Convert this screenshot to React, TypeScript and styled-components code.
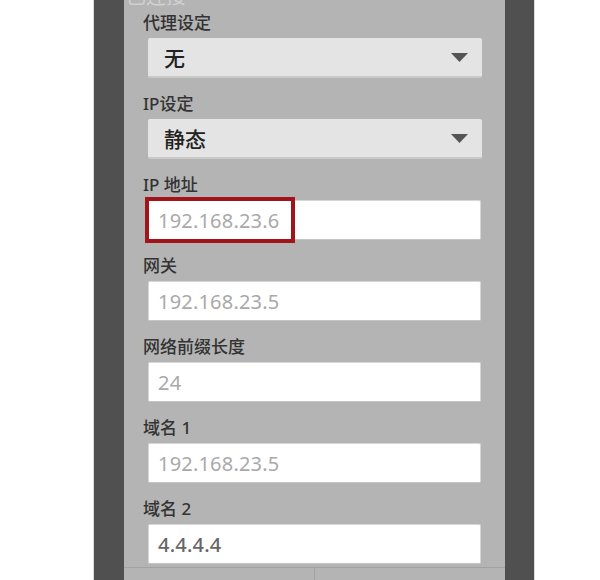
import React from "react";
import styled, { createGlobalStyle } from "styled-components";

const Global = createGlobalStyle`
  html, body { margin: 0; padding: 0; background: #ffffff; }
  body { font-family: "Noto Sans", "Noto Sans CJK SC", sans-serif; }
`;

const Page = styled.div`
  width: 600px;
  height: 580px;
  overflow: hidden;
  display: flex;
  background: #ffffff;
`;

const Gutter = styled.div<{ $side: "left" | "right" }>`
  background: #ffffff;
  box-sizing: border-box;
  ${(p) =>
    p.$side === "left"
      ? "width: 94px; flex: none; border-right: 1px solid #dcdcdc;"
      : "flex: 1; border-left: 1px solid #dcdcdc;"}
`;

const Frame = styled.div`
  width: 440px;
  flex: none;
  background: #505050;
  padding: 0 29px 0 30px;
  box-sizing: border-box;
  display: flex;
`;

const Panel = styled.div`
  flex: 1;
  background: #b4b4b4;
  display: flex;
  flex-direction: column;
`;

const Title = styled.div`
  height: 24px;
  margin-top: -16px;
  margin-bottom: 4px;
  padding-left: 2px;
  font-size: 20px;
  line-height: 24px;
  color: #d0d0d0;
  font-family: "Noto Sans CJK SC", sans-serif;
`;

const Form = styled.div`
  display: flex;
  flex-direction: column;
  gap: 15px;
`;

const Field = styled.div`
  display: flex;
  flex-direction: column;
`;

const Label = styled.div`
  height: 22px;
  line-height: 22px;
  margin-bottom: 4px;
  padding-left: 19px;
  font-size: 17px;
  font-weight: 500;
  color: #333333;
  font-family: "Noto Sans", "Noto Sans CJK SC", sans-serif;
`;

const Select = styled.div`
  margin: 0 23px 0 24px;
  height: 40px;
  box-sizing: border-box;
  background: #e4e4e4;
  border-bottom: 2px solid #c9c9c9;
  border-radius: 2px;
  display: flex;
  align-items: center;
  justify-content: space-between;
  padding: 0 14px 0 16px;
  font-size: 21px;
  font-weight: 500;
  color: #222222;
  font-family: "Noto Sans CJK SC", sans-serif;
`;

const Arrow = styled.svg`
  width: 17px;
  height: 9px;
  display: block;
`;

const InputBox = styled.div`
  position: relative;
  margin: 0 24px;
  height: 40px;
  box-sizing: border-box;
  background: #ffffff;
  border: 1px solid #d6d6d6;
  border-bottom-color: #c4c4c4;
  border-radius: 2px;
  display: flex;
  align-items: center;
  padding-left: 9px;
`;

const Value = styled.span<{ $filled?: boolean }>`
  font-size: 20px;
  font-family: "Noto Sans", sans-serif;
  font-weight: ${(p) => (p.$filled ? 500 : 400)};
  color: ${(p) => (p.$filled ? "#666666" : "#a9a9a9")};
  letter-spacing: 0.2px;
`;

const Highlight = styled.div`
  position: absolute;
  left: -4px;
  top: -4px;
  width: 150px;
  height: 46px;
  box-sizing: border-box;
  border: 4px solid #a3141a;
  pointer-events: none;
`;

const ButtonBar = styled.div`
  margin-top: 3px;
  border-top: 1px solid #a2a2a2;
  display: flex;
  height: 48px;
`;

const BarButton = styled.div<{ $divider?: boolean }>`
  flex: 1;
  ${(p) => (p.$divider ? "border-right: 1px solid #a2a2a2;" : "")}
`;

const DropArrow = () => (
  <Arrow viewBox="0 0 17 9">
    <polygon points="0,0 17,0 8.5,9" fill="#555555" />
  </Arrow>
);

const textFields: { label: string; value: string; filled?: boolean; mark?: boolean }[] = [
  { label: "IP 地址", value: "192.168.23.6", mark: true },
  { label: "网关", value: "192.168.23.5" },
  { label: "网络前缀长度", value: "24" },
  { label: "域名 1", value: "192.168.23.5" },
  { label: "域名 2", value: "4.4.4.4", filled: true },
];

export default function App() {
  return (
    <>
      <Global />
      <Page>
        <Gutter $side="left" />
        <Frame>
          <Panel>
            <Title>已连接</Title>
            <Form>
              <Field>
                <Label>代理设定</Label>
                <Select>
                  <span>无</span>
                  <DropArrow />
                </Select>
              </Field>
              <Field>
                <Label>IP设定</Label>
                <Select>
                  <span>静态</span>
                  <DropArrow />
                </Select>
              </Field>
              {textFields.map((f) => (
                <Field key={f.label}>
                  <Label>{f.label}</Label>
                  <InputBox>
                    <Value $filled={f.filled}>{f.value}</Value>
                    {f.mark && <Highlight />}
                  </InputBox>
                </Field>
              ))}
            </Form>
            <ButtonBar>
              <BarButton $divider />
              <BarButton />
            </ButtonBar>
          </Panel>
        </Frame>
        <Gutter $side="right" />
      </Page>
    </>
  );
}
